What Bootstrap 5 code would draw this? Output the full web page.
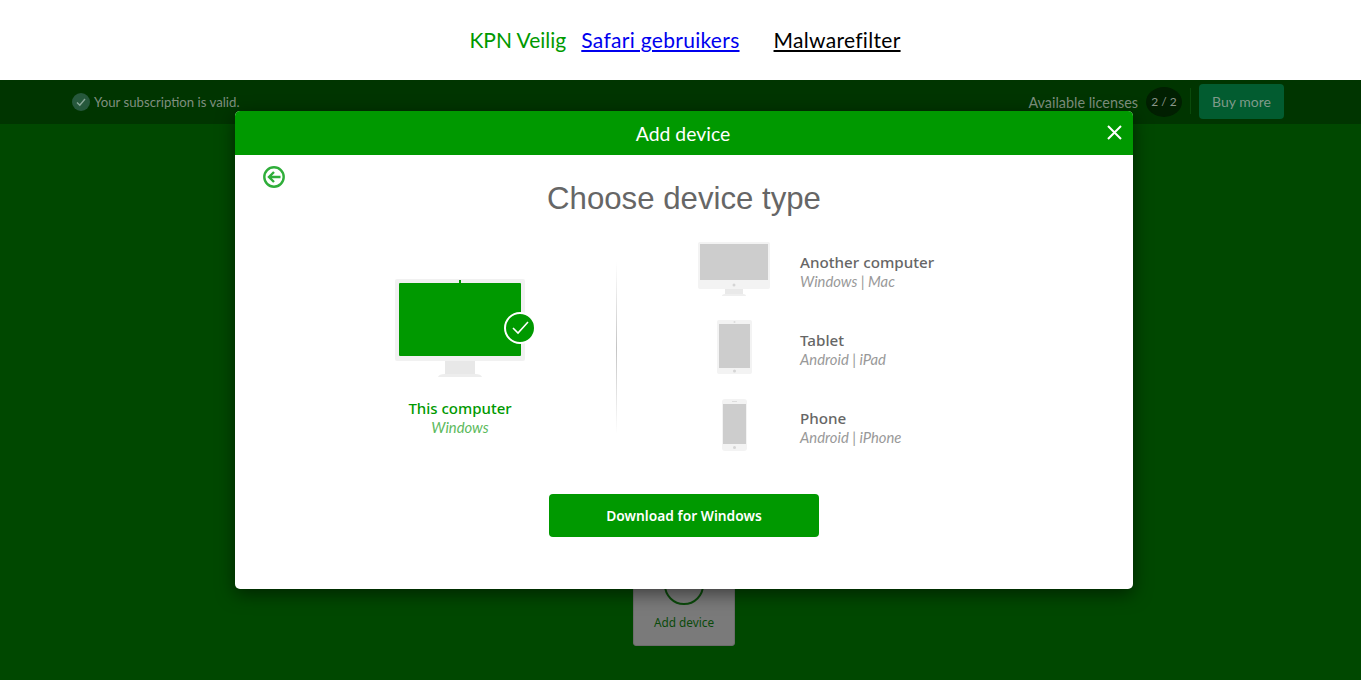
<!DOCTYPE html>
<html lang="en">
<head>
    <meta charset="UTF-8">
    <title>Add device</title>
    <link href="https://cdn.jsdelivr.net/npm/bootstrap@5.3.0/dist/css/bootstrap.min.css" rel="stylesheet">
    <style>
        body { font-family: "Noto Sans", sans-serif; overflow: hidden; height: 680px; background: #004800; }
        .top-links { height: 80px; padding-left: 9px; background: #fff; font-family: Lato, sans-serif; font-size: 21px; }
        .top-links span { color: #009900; }
        .top-links a { margin-left: 15px; letter-spacing: .3px; }
        .link-blue { color: #0000ee; }
        .link-black { color: #000; margin-left: 34px !important; }
        .sub-bar { height: 44px; padding: 0 77px 2px 72px; background: #003500; font-family: Lato, sans-serif; font-size: 13.2px; color: #7f8f7f; }
        .sub-left { margin-top: 3px; }
        .ok-dot { width: 18px; height: 18px; border-radius: 50%; background: #26583c; }
        .lic-label { font-size: 14.400px; margin-top: 3px; }
        .count-pill { width: 36px; height: 30px; margin-top: 1px; border-radius: 50%; background: #011f01; color: #8a968a; font-size: 12px; }
        .bar-sep { width: 1px; height: 26px; background: #0b4a0b; margin: 0 8px; }
        .buy-btn { width: 85px; height: 35px; border-radius: 4px; background: #025c30; color: #7f9a8a; font-size: 14px; border: 0; padding: 0; }
        .add-tile { width: 102px; height: 121px; margin: 401px 0 0 633px; background: #7a7a7a; border: 1px solid #6c6c6c; border-radius: 3px; color: #0b4a0b; font-size: 11.8px; padding-top: 39px; }
        .add-ring { width: 40px; height: 40px; border: 2px solid #0b4a0b; border-radius: 50%; margin-bottom: 9px; }
        .dlg { position: absolute; left: 235px; top: 111px; width: 898px; height: 478px; background: #fff; border-radius: 5px; box-shadow: 0 5px 18px rgba(0,0,0,.5); overflow: hidden; }
        .dlg-head { height: 44px; padding: 1px 2px 0 0; background: #009900; color: #fff; font-family: Lato, sans-serif; font-size: 19.4px; position: relative; }
        .dlg-close { position: absolute; right: 11px; top: 14px; line-height: 0; background: none; border: 0; padding: 0; }
        .back-arrow { margin: 11px 0 0 28px; height: 22px; line-height: 0; }
        .dlg-title { font-family: "Liberation Sans", sans-serif; font-size: 31.2px; font-weight: 400; color: #666; text-align: center; margin: -8px 0 0; line-height: 38px; height: 38px; }
        .picker { width: 672px; margin: 0 auto; height: 254px; padding-top: 14px; }
        .picked { width: 224px; padding-top: 45px; }
        .picked-name { font-size: 15px; font-weight: 500; color: #009900; line-height: 20px; margin-top: 21px; }
        .picked-os { font-family: Lato, sans-serif; font-size: 14.8px; font-style: italic; color: #5cba5c; line-height: 18px; }
        .split { width: 1px; height: 172px; margin: 30px 67px 0 44px; background: linear-gradient(#fff, #c4c4c4 50%, #fff); }
        .dev-row { height: 78px; }
        .dev-pic { width: 100px; margin-right: 16px; margin-bottom: 4px; line-height: 0; }
        .dev-name { font-size: 15.2px; font-weight: 500; color: #666; line-height: 20px; }
        .dev-os { font-family: Lato, sans-serif; font-size: 14.8px; font-style: italic; color: #999; line-height: 18px; }
        .dl-btn { display: block; width: 270px; height: 43px; margin: 22px auto 0; padding: 2px 0 0; background: #009900; border: 0; border-radius: 4px; color: #fff; font-size: 13.8px; font-weight: 600; }
    </style>
</head>
<body>
<!-- top links -->
<div class="top-links d-flex align-items-center justify-content-center">
    <span>KPN Veilig</span>
    <a class="link-blue" href="#">Safari gebruikers</a>
    <a class="link-black" href="#">Malwarefilter</a>
</div>

<!-- subscription bar -->
<div class="sub-bar d-flex align-items-center justify-content-between">
    <div class="sub-left d-flex align-items-center gap-1">
        <div class="ok-dot d-flex align-items-center justify-content-center">
            <svg width="10" height="10" viewBox="0 0 10 10"><path d="M1 5.5l2.8 2.8L9 2" fill="none" stroke="#8aa898" stroke-width="1.4"/></svg>
        </div>
        <span>Your subscription is valid.</span>
    </div>
    <div class="d-flex align-items-center">
        <span class="lic-label me-2">Available licenses</span>
        <div class="count-pill d-flex align-items-center justify-content-center">2 / 2</div>
        <div class="bar-sep"></div>
        <button class="buy-btn" type="button">Buy more</button>
    </div>
</div>

<!-- tile behind the dialog -->
<div class="add-tile d-flex flex-column align-items-center">
    <div class="add-ring"></div>
    <div>Add device</div>
</div>

<!-- dialog -->
<div class="dlg">
    <div class="dlg-head d-flex align-items-center justify-content-center">
        <span>Add device</span>
        <button class="dlg-close" type="button" aria-label="Close">
            <svg width="15" height="15" viewBox="0 0 15 15"><path d="M1 1l13 13M14 1L1 14" stroke="#fff" stroke-width="2" fill="none"/></svg>
        </button>
    </div>
    <div class="back-arrow">
        <svg width="22" height="22" viewBox="0 0 22 22"><circle cx="11" cy="11" r="9.700" fill="none" stroke="#2fae3a" stroke-width="2.400"/><path d="M17.500 11H6M11 6l-5 5 5 5" fill="none" stroke="#2fae3a" stroke-width="2.400"/></svg>
    </div>
    <h2 class="dlg-title">Choose device type</h2>
    <div class="picker d-flex">
        <div class="picked text-center">
            <svg width="150" height="100" viewBox="-8 0 150 100">
                <rect x="2" y="2" width="130" height="82" rx="2" fill="#f1f1f1"/>
                <rect x="6" y="6" width="122" height="73" rx="1" fill="#009900"/>
                <rect x="66" y="3" width="2" height="3" fill="#009900"/>
                <path d="M52 84h30v13H52z" fill="#e8e8e8"/>
                <path d="M45 100q1-3 7-3h30q6 0 7 3z" fill="#ededed"/>
                <circle cx="127" cy="51" r="15" fill="#009900" stroke="#fff" stroke-width="2"/>
                <path d="M120 51l5 5 10-11" fill="none" stroke="#fff" stroke-width="1.6"/>
            </svg>
            <div class="picked-name">This computer</div>
            <div class="picked-os">Windows</div>
        </div>
        <div class="split"></div>
        <div>
            <div class="dev-row d-flex align-items-center">
                <div class="dev-pic text-center">
                    <svg width="72" height="54" viewBox="0 0 72 54">
                        <rect width="72" height="47" rx="2" fill="#f3f3f3"/>
                        <rect x="2" y="2" width="68" height="36" fill="#cdcdcd"/>
                        <circle cx="36" cy="43" r="1.5" fill="#d5d5d5"/>
                        <path d="M27 47h18v5H27z" fill="#e9e9e9"/>
                        <path d="M24 54q0-2 3-2h18q3 0 3 2z" fill="#efefef"/>
                    </svg>
                </div>
                <div>
                    <div class="dev-name">Another computer</div>
                    <div class="dev-os">Windows | Mac</div>
                </div>
            </div>
            <div class="dev-row d-flex align-items-center">
                <div class="dev-pic text-center">
                    <svg width="35" height="54" viewBox="0 0 35 54">
                        <rect width="35" height="54" rx="2" fill="#f3f3f3"/>
                        <rect x="2" y="4" width="31" height="44" fill="#cdcdcd"/>
                        <circle cx="17.5" cy="51" r="1.5" fill="#d5d5d5"/>
                        <circle cx="17.5" cy="2" r="1" fill="#dcdcdc"/>
                    </svg>
                </div>
                <div>
                    <div class="dev-name">Tablet</div>
                    <div class="dev-os">Android | iPad</div>
                </div>
            </div>
            <div class="dev-row d-flex align-items-center">
                <div class="dev-pic text-center">
                    <svg width="25" height="52" viewBox="0 0 25 52">
                        <rect width="25" height="52" rx="3" fill="#f3f3f3"/>
                        <rect x="1" y="5" width="23" height="40" fill="#cdcdcd"/>
                        <circle cx="12.5" cy="48.500" r="1.5" fill="#d5d5d5"/>
                        <rect x="10" y="2" width="5" height="1" fill="#dcdcdc"/>
                    </svg>
                </div>
                <div>
                    <div class="dev-name">Phone</div>
                    <div class="dev-os">Android | iPhone</div>
                </div>
            </div>
        </div>
    </div>
    <button class="dl-btn" type="button">Download for Windows</button>
</div>
<script src="https://cdn.jsdelivr.net/npm/bootstrap@5.3.0/dist/js/bootstrap.bundle.min.js"></script>
</body>
</html>
